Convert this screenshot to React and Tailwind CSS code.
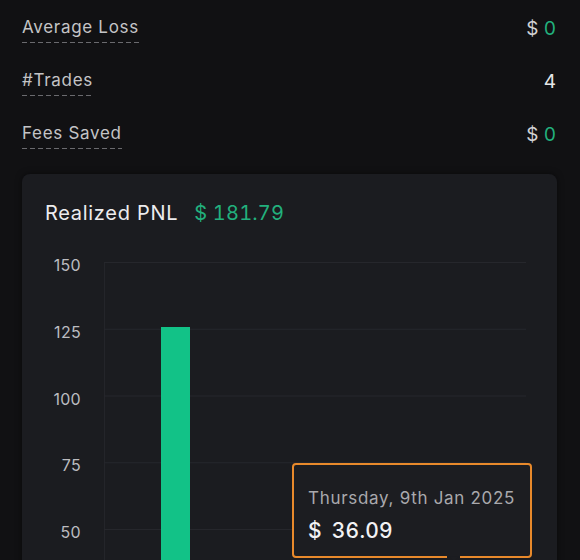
import React from 'react'

const stats = [
  { label: 'Average Loss', value: '0', currency: true },
  { label: '#Trades', value: '4', currency: false },
  { label: 'Fees Saved', value: '0', currency: true }
]

const yTicks = ['150', '125', '100', '75', '50']
const STEP = 66.75

const StatRow = ({ label, value, currency }) => (
  <div className="flex items-start justify-between">
    <div className="flex flex-col">
      <span className="text-[17px] leading-[24px] text-[#c4c4c6] tracking-[0.7px]">{label}</span>
      <div className="mt-[3px] h-px w-full bg-[repeating-linear-gradient(to_right,#6a6a6e_0_5px,transparent_5px_8px)]" />
    </div>
    <div className="text-[19px] leading-[24px] pt-[2px] tabular-nums">
      {currency ? (
        <>
          <span className="text-[#d2d2d4]">$</span>{' '}
          <span className="text-[#22b07d]">{value}</span>
        </>
      ) : (
        <span className="text-[#e6e6e8]">{value}</span>
      )}
    </div>
  </div>
)

const PnlChart = () => (
  <div className="flex">
    <div className="w-[59px] flex flex-col -mt-[7px]">
      {yTicks.map((tick) => (
        <div key={tick} className="h-[66.75px] text-right text-[16px] leading-[20px] text-[#bcbcc0] tracking-[0.3px]">
          {tick}
        </div>
      ))}
    </div>
    <svg width="422" height="300" className="ml-[23px] shrink-0">
      <line x1="0.5" y1="0" x2="0.5" y2="300" stroke="#24252a" strokeWidth="1" />
      {yTicks.map((tick, i) => (
        <line
          key={tick}
          x1="0"
          x2="422"
          y1={i * STEP + 0.5}
          y2={i * STEP + 0.5}
          stroke="#26272c"
          strokeWidth="1"
        />
      ))}
      <rect x="57" y="65" width="29" height="240" fill="#12c287" />
    </svg>
  </div>
)

export default function App() {
  return (
    <div className="w-[580px] h-[560px] overflow-hidden bg-[#111113] font-['Inter',sans-serif]">
      <div className="pt-[15px] pl-[22px] pr-[24px] flex flex-col gap-[25px]">
        {stats.map((s) => (
          <StatRow key={s.label} {...s} />
        ))}
      </div>

      <div className="relative mt-[25px] ml-[22px] w-[535px] h-[400px] rounded-lg bg-[#1b1c20] shadow-[0_0_6px_rgba(0,0,0,0.5)]">
        <div className="flex items-center gap-4 pl-[23px] pt-[25px] h-[53px] leading-[28px]">
          <span className="text-[20px] text-[#ececee] tracking-[0.7px]">Realized PNL</span>
          <span className="text-[20px] text-[#22b07d] tracking-[0.2px] tabular-nums">$ 181.79</span>
        </div>
        <div className="mt-[35px]">
          <PnlChart />
        </div>

        <div className="absolute left-[270px] top-[289px] w-[240px] h-[95px] rounded-[4px] border-2 border-[#e8892b] bg-[#1c1d21] px-[14px] pt-[21px]">
          <div className="text-[17px] leading-[24px] text-[#a9a9ad] tracking-[0.7px]">Thursday, 9th Jan 2025</div>
          <div className="mt-[8px] text-[21px] leading-[26px] font-medium text-[#f2f2f4] tabular-nums tracking-[0.2px]">
            $<span className="ml-[10px]">36.09</span>
          </div>
          <div className="absolute -bottom-[2px] left-[153px] w-[13px] h-[2px] bg-[#1b1c20]" />
          <div className="absolute -bottom-[5px] left-[156px] w-0 h-0 border-l-[4px] border-r-[4px] border-t-[4px] border-l-transparent border-r-transparent border-t-[#1c1d21]" />
        </div>
      </div>
    </div>
  )
}
